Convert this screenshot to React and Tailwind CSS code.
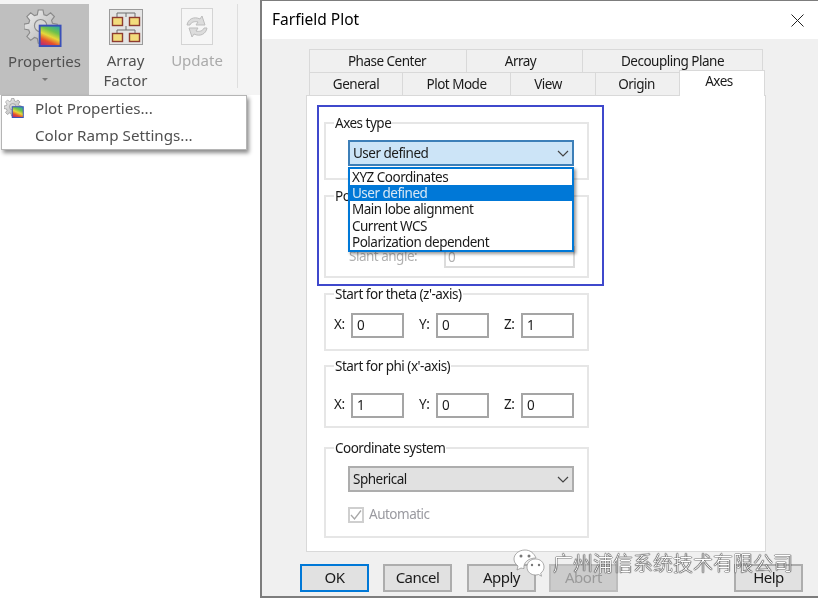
import React from 'react';

const GearRamp = ({ className }) => (
  <svg viewBox="0 0 40 40" className={className}>
    <defs>
      <linearGradient id="ramp" x1="0.8" y1="0" x2="0.35" y2="1">
        <stop offset="0" stopColor="#2fa8a0" />
        <stop offset="0.3" stopColor="#6fc24a" />
        <stop offset="0.55" stopColor="#e6d83a" />
        <stop offset="0.8" stopColor="#e8502c" />
        <stop offset="1" stopColor="#c0306a" />
      </linearGradient>
      <linearGradient id="gear" x1="0" y1="0" x2="1" y2="1">
        <stop offset="0" stopColor="#f2f2f2" />
        <stop offset="1" stopColor="#a9a9a9" />
      </linearGradient>
    </defs>
    <path
      d="M15 1h5l1 5 3 1 4-3 4 4-3 4 1 3 5 1v5l-5 1-1 3 3 4-4 4-4-3-3 1-1 5h-5l-1-5-3-1-4 3-4-4 3-4-1-3-5-1v-5l5-1 1-3-3-4 4-4 4 3 3-1z"
      fill="url(#gear)"
      stroke="#8a8a8a"
      strokeWidth="1.2"
    />
    <circle cx="17.5" cy="17.5" r="6.5" fill="#d6d6d6" stroke="#8e8e8e" strokeWidth="1.2" />
    <rect x="16.5" y="17.5" width="22" height="21.5" fill="url(#ramp)" stroke="#3a50b8" strokeWidth="2" />
  </svg>
);

const ArrayIcon = () => (
  <svg viewBox="0 0 34 36" className="h-[36px] w-[34px]">
    <rect x="0.5" y="0.5" width="33" height="35" fill="#e4e4e4" stroke="#9a9a9a" />
    <path d="M8 8V4h18v4M17 4v4M8 24v-3h18v3M17 17v4" fill="none" stroke="#6f6f6f" />
    <rect x="3.5" y="8.5" width="10" height="8" fill="#f3dc7c" stroke="#8e3c30" strokeWidth="1.4" />
    <rect x="20.5" y="8.5" width="10" height="8" fill="#f3dc7c" stroke="#8e3c30" strokeWidth="1.4" />
    <rect x="3.5" y="24.5" width="10" height="8" fill="#f3dc7c" stroke="#8e3c30" strokeWidth="1.4" />
    <rect x="20.5" y="24.5" width="10" height="8" fill="#f3dc7c" stroke="#8e3c30" strokeWidth="1.4" />
  </svg>
);

const UpdateIcon = () => (
  <svg viewBox="0 0 32 37" className="h-[37px] w-[32px]">
    <rect x="0.5" y="0.5" width="31" height="36" fill="#f6f6f6" stroke="#d4d4d4" />
    <path d="M6 17c1-6 7-9 13-6l2-3 3 9-9 0 2-3c-3-1-7 0-8 3z" fill="#dcdcdc" stroke="#bdbdbd" />
    <path d="M26 20c-1 6-7 9-13 6l-2 3-3-9 9 0-2 3c3 1 7 0 8-3z" fill="#dcdcdc" stroke="#bdbdbd" />
  </svg>
);

const Chevron = () => (
  <svg viewBox="0 0 12 7" className="h-[7px] w-[12px]">
    <path d="M1 1l5 5 5-5" fill="none" stroke="#444" strokeWidth="1.2" />
  </svg>
);

const Ribbon = () => (
  <div className="h-[95px] bg-[#f4f4f4] pt-1 flex items-stretch text-[15px] tracking-normal">
    <div className="w-[89px] bg-[#bfbfbf] flex flex-col items-center">
      <GearRamp className="h-[40px] w-[38px] mt-[4px] -ml-[4px]" />
      <span className="leading-[20px] mt-[3px] text-[#505050]">Properties</span>
      <span className="mt-[7px] h-0 w-0 border-x-[3px] border-t-[3px] border-x-transparent border-t-[#777]" />
    </div>
    <div className="w-[75px] flex flex-col items-center pt-[5px] -ml-[1px]">
      <ArrayIcon />
      <span className="leading-[20px] mt-[5px] text-[#505050] text-center">Array<br />Factor</span>
    </div>
    <div className="w-[68px] flex flex-col items-center pt-[4px]">
      <UpdateIcon />
      <span className="leading-[20px] mt-[5px] text-[#aaaaaa]">Update</span>
    </div>
    <div className="w-px bg-[#dedede] ml-[6px] h-[84px]" />
  </div>
);

const Tab = ({ w, className = '', children }) => (
  <div style={{ width: w }} className={`h-full flex items-center justify-center bg-[#f0f0f0] border border-b-0 border-[#d9d9d9] -ml-px first:ml-0 ${className}`}>
    {children}
  </div>
);

const Group = ({ title, className, children }) => (
  <div className={`relative border-2 border-[#e6e6e6] w-[265px] ${className}`}>
    <span className="absolute left-[8px] -top-[10px] bg-white px-[1px] leading-[18px] whitespace-nowrap">{title}</span>
    {children}
  </div>
);

const Field = ({ label, value }) => (
  <div className="flex items-center">
    <span className="w-[17px] -mt-[2px]">{label}</span>
    <div className="w-[53px] h-[25px] border-2 border-[#a5a5a5] bg-white pl-[4px] leading-[21px]">{value}</div>
  </div>
);

const XyzRow = ({ values, className }) => (
  <div className={`flex gap-[15px] ml-[8px] ${className}`}>
    <Field label="X:" value={values[0]} />
    <Field label="Y:" value={values[1]} />
    <Field label="Z:" value={values[2]} />
  </div>
);

const DialogButton = ({ className, children }) => (
  <div className={`w-[69px] h-[28px] pb-px flex items-center justify-center border-2 text-[15px] ${className}`}>{children}</div>
);

const App = () => {
  const axesTypes = ['XYZ Coordinates', 'User defined', 'Main lobe alignment', 'Current WCS', 'Polarization dependent'];

  return (
    <div
      className="relative w-[818px] h-[599px] overflow-hidden bg-white flex text-[13.5px] tracking-[-0.5px] text-[#1a1a1a] blur-[0.35px]"
      style={{ fontFamily: '"Noto Sans", "Noto Sans CJK SC", sans-serif' }}
    >
      {/* ribbon on the left */}
      <div className="w-[260px] shrink-0">
        <Ribbon />
      </div>

      {/* dialog */}
      <div className="flex-1 flex flex-col border-2 border-r-0 border-t border-[#7d7d7d] h-[598px] bg-[#f0f0f0]">
        <div className="h-[38px] shrink-0 bg-white flex items-center justify-between pl-[10px] pr-[14px]">
          <span className="text-[15.5px] tracking-normal text-black">Farfield Plot</span>
          <svg viewBox="0 0 13 13" className="h-[13px] w-[13px]">
            <path d="M0.5 0.5l12 12M12.5 0.5l-12 12" stroke="#222" strokeWidth="1" />
          </svg>
        </div>

        <div className="pt-[10px] pl-[44px]">
          <div className="ml-[3px] h-[23px] flex">
            <Tab w={158} className="pr-[2px]">Phase Center</Tab>
            <Tab w={117} className="pr-[8px]">Array</Tab>
            <Tab w={181}>Decoupling Plane</Tab>
          </div>
          <div className="ml-[3px] h-[23px] flex items-end">
            <Tab w={94}>General</Tab>
            <Tab w={109}>Plot Mode</Tab>
            <Tab w={86} className="pr-[10px]">View</Tab>
            <Tab w={85} className="pr-[2px]">Origin</Tab>
            <div className="relative z-10 w-[86px] h-[26px] -ml-px -mb-px pr-[6px] bg-white border border-b-0 border-[#d9d9d9] flex justify-center">Axes</div>
          </div>

          <div className="w-[460px] h-[457px] bg-white border border-[#d9d9d9] pl-[17px]">
            <Group title="Axes type" className="mt-[26px] h-[58px] pl-[22px] pt-[16px]">
              <div className="w-[226px] h-[26px] bg-[#cce4f7] border-2 border-[#3d7fb8] flex items-center justify-between px-[3px]">
                <span>User defined</span>
                <Chevron />
              </div>
            </Group>

            <Group title="Polarization" className="mt-[15px] h-[83px]">
              <div className="flex items-center mt-[49px] ml-[23px] text-[#b0b0b0]">
                <span className="w-[95px] -mt-[2px]">Slant angle:</span>
                <div className="w-[131px] h-[22px] border-2 border-[#dcdcdc] pl-[2px] leading-[18px]">0</div>
              </div>
            </Group>

            <Group title="Start for theta (z'-axis)" className="mt-[15px] h-[58px]">
              <XyzRow values={['0', '0', '1']} className="mt-[18px]" />
            </Group>

            <Group title="Start for phi (x'-axis)" className="mt-[14px] h-[63px]">
              <XyzRow values={['1', '0', '0']} className="mt-[26px]" />
            </Group>

            <Group title="Coordinate system" className="mt-[19px] h-[91px] pl-[22px] pt-[17px]">
              <div className="w-[226px] h-[26px] bg-[#e1e1e1] border-2 border-[#adadad] flex items-center justify-between px-[3px]">
                <span>Spherical</span>
                <Chevron />
              </div>
              <div className="flex items-center gap-[5px] mt-[14px] text-[#9a9aa0]">
                <div className="w-[16px] h-[16px] border-2 border-[#cfcfcf] flex items-center justify-center">
                  <svg viewBox="0 0 12 12" className="h-[12px] w-[12px]">
                    <path d="M1 6l3.5 4L11 1.500" fill="none" stroke="#a8a8a8" strokeWidth="1.3" />
                  </svg>
                </div>
                <span className="-mt-[2px]">Automatic</span>
              </div>
            </Group>
          </div>

          <div className="flex mt-[12px] -ml-[6px]">
            <DialogButton className="border-[#0078d7] bg-[#e1e1e1]">OK</DialogButton>
            <DialogButton className="ml-[14px] border-[#adadad] bg-[#e1e1e1]">Cancel</DialogButton>
            <DialogButton className="ml-[15px] border-[#adadad] bg-[#e1e1e1]">Apply</DialogButton>
            <DialogButton className="ml-[13px] border-[#bdbdbd] bg-[#cccccc] text-[#9a9a9a]">Abort</DialogButton>
            <DialogButton className="ml-[116px] border-[#adadad] bg-[#e1e1e1]">Help</DialogButton>
          </div>
        </div>
      </div>

      {/* ribbon menu, open over the page */}
      <div className="absolute left-[1px] top-[95px] w-[246px] h-[55px] bg-white border border-[#b5b5b5] shadow-[2px_3px_4px_rgba(0,0,0,0.45)] text-[15.2px] tracking-normal text-[#505050]">
        <GearRamp className="absolute left-[2px] top-[2px] h-[20px] w-[20px]" />
        <div className="pl-[33px] pt-[2px] leading-[20px]">Plot Properties...</div>
        <div className="pl-[33px] pt-[7px] leading-[20px]">Color Ramp Settings...</div>
      </div>

      {/* highlight box drawn on the screenshot */}
      <div className="absolute left-[317px] top-[105px] w-[287px] h-[181px] border-2 border-[#3f48cc]" />

      {/* open combo list */}
      <div className="absolute left-[348px] top-[167px] w-[226px] h-[85px] bg-white border-2 border-[#0078d7] shadow-[2px_2px_3px_rgba(0,0,0,0.4)]">
        {axesTypes.map((item) => (
          <div
            key={item}
            className={`h-[16.2px] leading-[16px] pl-[2px] whitespace-nowrap ${item === 'User defined' ? 'bg-[#0078d7] text-[#d8e8f5]' : ''}`}
          >
            {item}
          </div>
        ))}
      </div>

      {/* watermark */}
      <div className="absolute left-[513px] top-[547px] flex items-center gap-[8px]">
        <svg viewBox="0 0 32 30" className="h-[30px] w-[32px]">
          <path d="M12 2C6 2 1 6 1 11c0 3 1.500 5 4 7l-1 4 4-2c1 .400 2 .500 3 .500C10 15 15 10 23 10 21 5 17 2 12 2z" fill="#fff" stroke="#8a8a8a" strokeWidth="0.7" />
          <path d="M31 19c0-5-4-8-8.500-8S14 14 14 19s4 8 8.500 8c1 0 2-.2 3-.5l3 1.700-.8-3C30 23.500 31 21.500 31 19z" fill="#fff" stroke="#8a8a8a" strokeWidth="0.7" />
          <circle cx="8" cy="8" r="1.500" fill="#777" />
          <circle cx="16" cy="8" r="1.500" fill="#777" />
          <circle cx="19" cy="17" r="1.200" fill="#777" />
          <circle cx="26" cy="17" r="1.200" fill="#777" />
        </svg>
        <span className="text-[20px] leading-[28px] tracking-normal font-light text-white whitespace-nowrap mt-[3px] [text-shadow:0_0_1px_#111,0_0_1px_#111,0_0_1px_#111]">广州浦信系统技术有限公司</span>
      </div>
    </div>
  );
};

export default App;
